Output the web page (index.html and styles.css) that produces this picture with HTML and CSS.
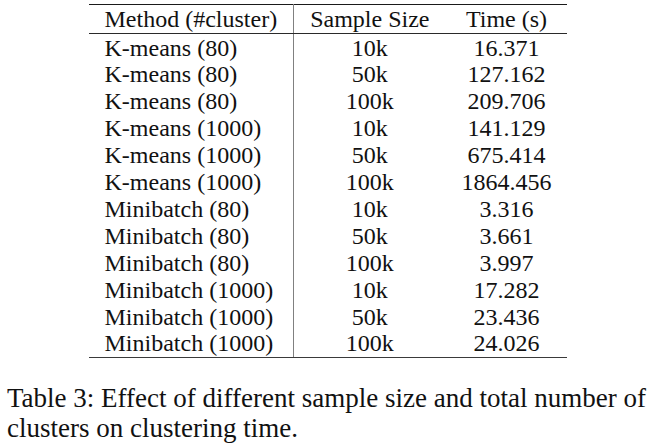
FILE: index.html
```html
<!DOCTYPE html>
<html lang="en">
<head>
<meta charset="utf-8">
<title>Table 3</title>
<link rel="stylesheet" href="styles.css">
</head>
<body>
<div class="page">
  <table class="results">
    <thead>
      <tr>
        <th class="method">Method (#cluster)</th>
        <th>Sample Size</th>
        <th>Time (s)</th>
      </tr>
    </thead>
    <tbody>
      <tr><td class="method">K-means (80)</td><td>10k</td><td>16.371</td></tr>
      <tr><td class="method">K-means (80)</td><td>50k</td><td>127.162</td></tr>
      <tr><td class="method">K-means (80)</td><td>100k</td><td>209.706</td></tr>
      <tr><td class="method">K-means (1000)</td><td>10k</td><td>141.129</td></tr>
      <tr><td class="method">K-means (1000)</td><td>50k</td><td>675.414</td></tr>
      <tr><td class="method">K-means (1000)</td><td>100k</td><td>1864.456</td></tr>
      <tr><td class="method">Minibatch (80)</td><td>10k</td><td>3.316</td></tr>
      <tr><td class="method">Minibatch (80)</td><td>50k</td><td>3.661</td></tr>
      <tr><td class="method">Minibatch (80)</td><td>100k</td><td>3.997</td></tr>
      <tr><td class="method">Minibatch (1000)</td><td>10k</td><td>17.282</td></tr>
      <tr><td class="method">Minibatch (1000)</td><td>50k</td><td>23.436</td></tr>
      <tr><td class="method">Minibatch (1000)</td><td>100k</td><td>24.026</td></tr>
    </tbody>
  </table>
  <p class="caption">Table 3: Effect of different sample size and total number of clusters on clustering time.</p>
</div>
</body>
</html>
```

FILE: styles.css
```css
html, body {
  margin: 0;
  padding: 0;
  background: #ffffff;
}

.page {
  padding-top: 4px;
  font-family: "Liberation Serif", "Times New Roman", serif;
  color: #111111;
}

.results {
  margin: 0 auto;
  border-collapse: collapse;
  font-size: 24px;
}

.results th,
.results td {
  padding: 0 16px;
  text-align: center;
  font-weight: normal;
  white-space: nowrap;
}

.results th {
  height: 27px;
  line-height: 27px;
  padding-top: 1px;
  vertical-align: top;
  border-top: 1.5px solid #1a1a1a;
  border-bottom: 1px solid #2a2a2a;
}

.results td {
  height: 25.4px;
  line-height: 25.4px;
  padding-top: 1.5px;
  padding-bottom: 0;
  vertical-align: top;
}

.results .method {
  text-align: left;
  border-right: 1.5px solid #808080;
}

.results tbody tr:last-child td {
  border-bottom: 1px solid #3a3a3a;
}

.caption {
  margin: 25px 0 0 7px;
  font-size: 27px;
  line-height: 30px;
}
```
